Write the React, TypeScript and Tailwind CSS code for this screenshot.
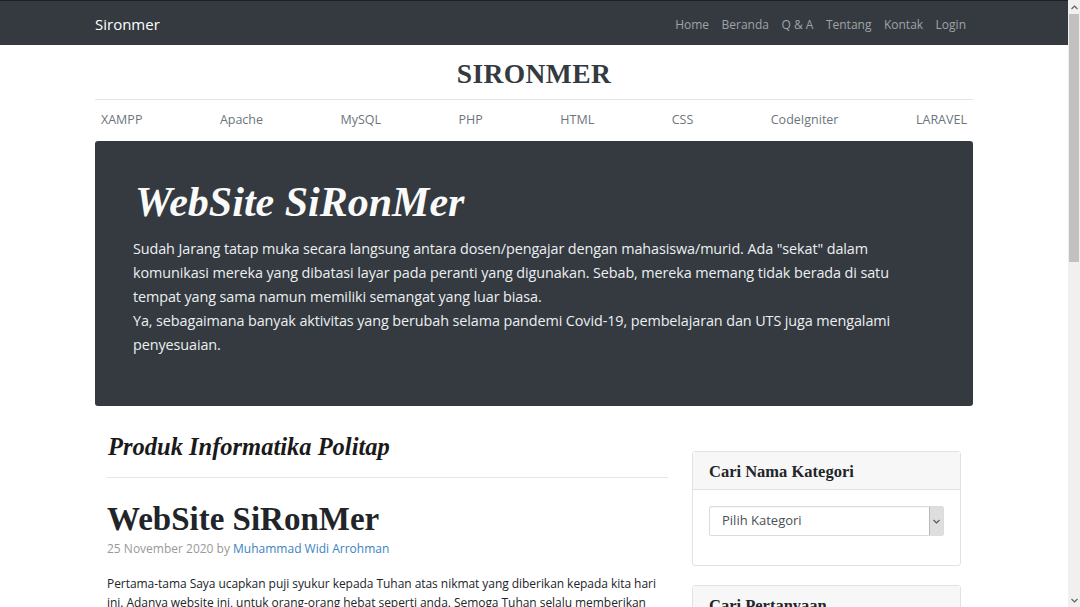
import React from "react";

const sans = "font-['Open_Sans','Noto_Sans',sans-serif]";
const serif = "font-['Liberation_Serif','DejaVu_Serif',serif]";

const topLinks = ["Home", "Beranda", "Q & A", "Tentang", "Kontak", "Login"];
const cats = ["XAMPP", "Apache", "MySQL", "PHP", "HTML", "CSS", "CodeIgniter", "LARAVEL"];

function Scrollbar() {
  return (
    <div className="flex w-[12px] shrink-0 flex-col bg-[#f0f0f0]">
      <div className="flex h-[14px] items-center justify-center text-[#606060]">
        <svg width="7" height="5" viewBox="0 0 7 5">
          <path d="M0.5 4 L3.5 1 L6.5 4" fill="none" stroke="currentColor" strokeWidth="1.2" />
        </svg>
      </div>
      <div className="mx-[1px] h-[248px] bg-[#c1c1c1]" />
      <div className="flex-1" />
      <div className="flex h-[14px] items-center justify-center text-[#606060]">
        <svg width="7" height="5" viewBox="0 0 7 5">
          <path d="M0.5 1 L3.5 4 L6.5 1" fill="none" stroke="currentColor" strokeWidth="1.2" />
        </svg>
      </div>
    </div>
  );
}

function SideCard({ title, children }: { title: string; children?: React.ReactNode }) {
  return (
    <div className="mb-[19px] rounded-[3px] border border-[#e2e2e2] bg-white">
      <div className="flex h-[38px] items-center border-b border-[#e2e2e2] bg-[#f7f7f7] px-[16px] pt-[3px]">
        <h4 className={`${serif} text-[16.5px] font-bold text-[#212529]`}>{title}</h4>
      </div>
      {children}
    </div>
  );
}

export default function App() {
  return (
    <div className={`flex h-[607px] w-[1080px] overflow-hidden bg-white ${sans}`}>
      <div className="flex w-[1068px] flex-col overflow-hidden">
        {/* top navbar */}
        <nav className="h-[45px] shrink-0 border-t border-[#1d2124] bg-[#343a40] pt-[3px]">
          <div className="mx-auto flex h-full w-[878px] items-center justify-between">
            <span className="text-[15px] text-white">Sironmer</span>
            <ul className="flex gap-[12.5px] pr-[7px] text-[12px] text-[#a0a3a6]">
              {topLinks.map((l) => (
                <li key={l}>{l}</li>
              ))}
            </ul>
          </div>
        </nav>

        <div className="mx-auto w-[878px]">
          {/* header */}
          <header className="flex h-[55px] items-center justify-center border-b border-[#e5e5e5] pt-[3px]">
            <h1 className={`${serif} text-[27.5px] font-bold tracking-[0.4px] text-[#343a40]`}>SIRONMER</h1>
          </header>

          {/* category scroller */}
          <div className="flex h-[38px] items-center justify-between px-[6px] pt-[2px] text-[12.5px] text-[#6c757d]">
            {cats.map((c) => (
              <a key={c}>{c}</a>
            ))}
          </div>

          {/* jumbotron */}
          <section className="mt-[3px] h-[265px] rounded-[3px] bg-[#343a40] px-[38px] pt-[37px] text-white">
            <h2 className={`${serif} pl-[2px] text-[42px] font-bold italic leading-[48px] text-[#fafafa]`}>
              WebSite SiRonMer
            </h2>
            <p className="mt-[11px] w-[780px] text-[14.4px] leading-[24px] tracking-[-0.1px] text-[#eceff1]">
              Sudah Jarang tatap muka secara langsung antara dosen/pengajar dengan mahasiswa/murid. Ada "sekat" dalam
              komunikasi mereka yang dibatasi layar pada peranti yang digunakan. Sebab, mereka memang tidak berada di satu
              tempat yang sama namun memiliki semangat yang luar biasa.
              <br />
              Ya, sebagaimana banyak aktivitas yang berubah selama pandemi Covid-19, pembelajaran dan UTS juga mengalami
              penyesuaian.
            </p>
          </section>

          {/* main + sidebar */}
          <div className="mt-[24px] grid grid-cols-[585px_293px]">
            <main className="px-[12px]">
              <h3 className={`${serif} mt-[2px] pl-[1px] text-[24.5px] font-bold italic leading-[30px] text-[#1a1a1a]`}>
                Produk Informatika Politap
              </h3>
              <div className="mt-[15px] border-t border-[#e5e5e5]" />
              <h2 className={`${serif} mt-[21px] text-[33px] font-bold leading-[40px] text-[#212529]`}>
                WebSite SiRonMer
              </h2>
              <p className="mt-[1px] text-[12px] text-[#999]">
                25 November 2020 by <a className="text-[#3a83c2]">Muhammad Widi Arrohman</a>
              </p>
              <p className="mt-[16px] text-[12px] leading-[19px] tracking-[-0.05px] text-[#212529]">
                Pertama-tama Saya ucapkan puji syukur kepada Tuhan atas nikmat yang diberikan kepada kita hari
                ini. Adanya website ini, untuk orang-orang hebat seperti anda. Semoga Tuhan selalu memberikan
                kesehatan dan kemudahan bagi kita semua dalam menuntut ilmu.
              </p>
            </main>

            <aside className="px-[12px] pt-[21px]">
              <SideCard title="Cari Nama Kategori">
                <div className="px-[16px] pb-[29px] pt-[16px]">
                  <div className="flex h-[30px] items-center justify-between rounded-[2px] border border-[#dcdcdc] bg-white pl-[12px] text-[13px] text-[#495057] shadow-[inset_0_1px_1px_rgba(0,0,0,0.04)]">
                    <span>Pilih Kategori</span>
                    <span className="flex h-[28px] w-[14px] items-center justify-center border-l border-[#b9b9b9] bg-[#dedede] text-[#555]">
                      <svg width="7" height="5" viewBox="0 0 7 5">
                        <path d="M0.5 1 L3.5 4 L6.5 1" fill="none" stroke="currentColor" strokeWidth="1.1" />
                      </svg>
                    </span>
                  </div>
                </div>
              </SideCard>
              <SideCard title="Cari Pertanyaan">
                <div className="h-[80px]" />
              </SideCard>
            </aside>
          </div>
        </div>
      </div>
      <Scrollbar />
    </div>
  );
}
